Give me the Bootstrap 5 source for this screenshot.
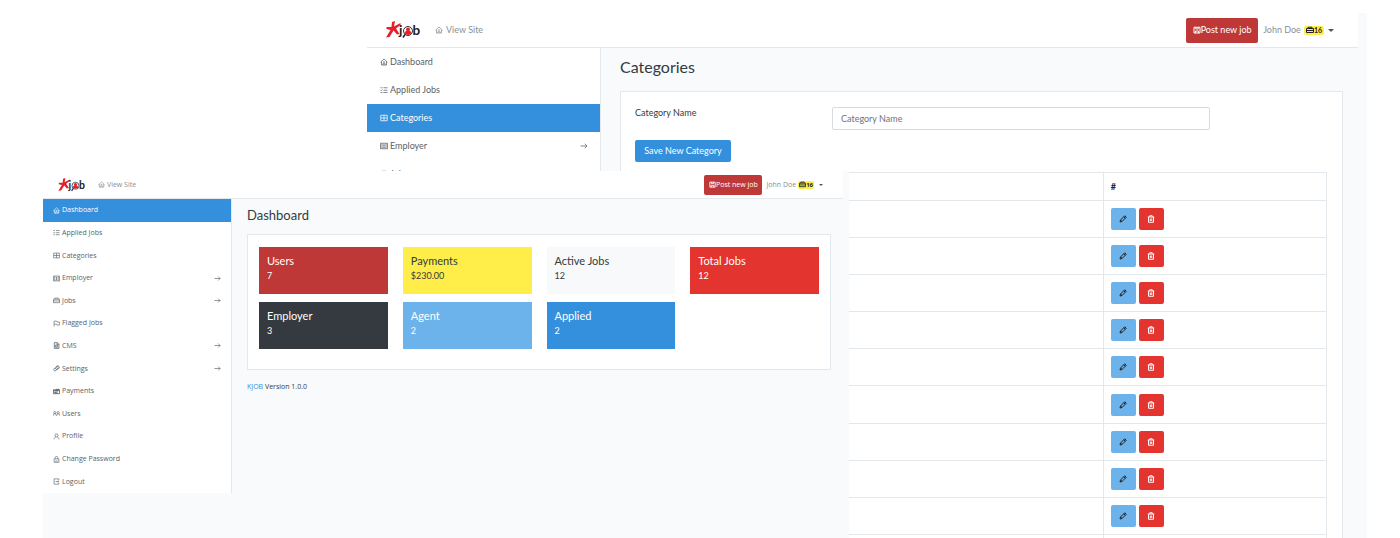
<!DOCTYPE html>
<html lang="en">
<head>
<meta charset="utf-8">
<meta name="viewport" content="width=device-width, initial-scale=1">
<title>KJOB admin</title>
<link href="https://cdn.jsdelivr.net/npm/bootstrap@5.3.0/dist/css/bootstrap.min.css" rel="stylesheet">
<style>
  :root { --line: #e3e8ec; --brand-red: #bf3838; --blue: #3490dc; --sky: #6cb2eb; --red: #e3342f; --yellow: #ffed4a; --ink: #343a40; }
  body { background: #fff; color: var(--ink); font-family: Lato, "Nunito", "Open Sans", sans-serif; }
  a { text-decoration: none; }
  /* Two overlapping windows on one grid */
  .stage { display: grid; height: 100vh; overflow: hidden; grid-template-columns: 43fr 324fr 482fr 518fr 33fr; grid-template-rows: 13px 158px minmax(0, 1fr); }
  .win { background: #f8fafc; min-width: 0; overflow: hidden; }
  .win-back { grid-area: 2 / 3 / 4 / 5; font-size: 9px; line-height: 12px; padding-right: 9px; }
  .win-front { grid-area: 3 / 2 / 4 / 4; z-index: 1; font-family: "Open Sans", Lato, sans-serif; font-size: 7px; line-height: 10px; padding-right: 6px; }
  .ico { width: 8px; height: 8px; fill: none; stroke: currentColor; stroke-width: 1.5; flex: none; }
  .win-front .ico { width: 7px; height: 7px; }
  .topbar { background: #fff; border-bottom: 1px solid var(--line); color: #8b9095; }
  .topbar a { color: inherit; }
  .win-back .topbar { height: 35px; padding: 0 24px 0 19px; }
  .win-front .topbar { height: 28px; padding: 0 20px 0 15px; }
  .win-back .logo { width: 35px; height: 18px; margin-right: 14px; }
  .win-front .logo { width: 28px; height: 14px; margin-right: 12px; }
  .site-link { gap: 3px; }
  .win-front .site-link { gap: 2px; }
  .post-btn { background: var(--brand-red); color: #fff; border: 0; font-size: inherit; line-height: inherit; border-radius: 2px; padding: 0; white-space: nowrap; }
  .post-btn:hover { background: #a93030; color: #fff; }
  .win-back .post-btn { width: 72px; height: 25px; margin-right: 5px; }
  .win-front .post-btn { width: 58px; height: 20px; margin-right: 4px; }
  .user-btn { background: none; border: 0; padding: 0; color: inherit; gap: 3px; }
  .user-btn .ico { stroke-width: 2; }
  .win-front .user-btn { gap: 2px; }
  .count { background: var(--yellow); color: #212529; border-radius: 2px; font-weight: 700; padding: 0 2px; }
  .win-back .count { font-size: 7px; line-height: 9px; }
  .win-front .count { font-size: 6px; line-height: 8px; padding: 0 1px; }
  .caret { border: 3px solid transparent; border-top-color: #555; border-bottom: 0; margin-left: 1px; }
  .win-front .caret { border-width: 2px; border-bottom: 0; margin-left: 3px; }
  .side { background: #fff; border-right: 1px solid var(--line); }
  .win-back .side { flex: 0 0 234px; }
  .win-front .side { flex: 0 0 189px; height: 294px; }
  .side a { color: #5a6168; gap: 2px; }
  .win-back .side a { height: 28px; padding: 0 12px 0 13px; }
  .win-front .side a { padding: 0 10px; flex: 1 1 0; }
  .side a.active { background: var(--blue); color: #fff; }
  .panel { background: #fff; border: 1px solid var(--line); }
  .win-back .content { padding: 0 15px 0 19px; }
  .win-front .content { padding: 0 12px 0 15px; }
  .win-back h1 { font-size: 16px; line-height: 20px; margin: 9px 0 14px; }
  .win-front h1 { font-family: Lato, sans-serif; font-size: 13px; line-height: 16px; margin: 8px 0 11px; }
  .win-back .panel { padding: 15px 15px 0 14px; }
  .form-line { display: grid; grid-template-columns: 197fr 378fr 117fr; margin-bottom: 10px; }
  .form-line input { height: 23px; font-size: inherit; line-height: 12px; padding: 0 8px; border: 1px solid #d5dbe1; border-radius: 2px; }
  .form-line input::placeholder { color: #6c757d; }
  .save-btn { background: var(--blue); color: #fff; border: 0; border-radius: 2px; width: 96px; height: 22px; padding: 0; font-size: inherit; line-height: inherit; }
  .jobs-table { height: 400px; margin: 10px 0 0; border: 1px solid var(--line); table-layout: fixed; }
  .jobs-table th, .jobs-table td { border: 1px solid var(--line); padding: 0 7px; vertical-align: middle; color: #212529; }
  .jobs-table thead th { height: 28px; }
  .act { width: 25px; height: 22px; border: 0; border-radius: 2px; padding: 0; }
  .act .ico { stroke-width: 2; }
  .act-edit { background: var(--sky); color: #212529; }
  .act-del { background: var(--red); color: #fff; }
  .tiles { display: grid; grid-template-columns: repeat(4, 1fr); gap: 8px 15px; padding: 12px 11px 20px; }
  .tile { padding: 7px 8px 8px; height: 47px; color: #fff; font-family: Lato, sans-serif; font-size: 9px; line-height: 12px; }
  .tile h2 { font-size: 11px; line-height: 13px; margin: 0 0 3px; font-weight: 400; }
  .foot { margin-top: 12px; }
  .foot a { color: var(--blue); }
</style>
</head>
<body>
<svg class="d-none" xmlns="http://www.w3.org/2000/svg">
  <symbol id="i-home" viewBox="0 0 16 16"><path d="M1 8.500 8 2l7 6.500M3 7v7h10V7M6 14v-2a2 2 0 0 1 4 0v2M6 8h4"/></symbol>
  <symbol id="i-list" viewBox="0 0 16 16"><path d="M1 3l1.500 1.500L5 2M1 8l1.500 1.500L5 7M1 13h4M7 3.500h8M7 8.500h8M7 13h8"/></symbol>
  <symbol id="i-grid" viewBox="0 0 16 16"><path d="M1.500 2.500h13v11h-13zM8 2.500v11M1.500 8h13"/></symbol>
  <symbol id="i-emp" viewBox="0 0 16 16"><path d="M1 2.500h14v11H1zM4 3v10M12 3v10M8 5v6M6.500 6h3M6.500 11h3"/></symbol>
  <symbol id="i-case" viewBox="0 0 16 16"><path d="M1 5h14v8H1zM4 5V2.500h8V5M1 9h14"/></symbol>
  <symbol id="i-flag" viewBox="0 0 16 16"><path d="M2.500 15V2.500H8l1 2h5.500v7H9l-1-2H3"/></symbol>
  <symbol id="i-file" viewBox="0 0 16 16"><path d="M3 1.500h7l3.500 3.500v9.500H3zM6 7h4v5H6zM9.500 2v4H13" stroke-width="1.800"/></symbol>
  <symbol id="i-link" viewBox="0 0 16 16"><circle cx="4.500" cy="10.500" r="3"/><circle cx="11" cy="5" r="3"/><path d="M7 11l4-1 3-5M5 7l3-4 4-1"/></symbol>
  <symbol id="i-card" viewBox="0 0 16 16"><path d="M1 4h14v9H1zM1 6h14M4 9h3v2H4zM9 4v9M7 3h7" stroke-width="2"/></symbol>
  <symbol id="i-users" viewBox="0 0 16 16"><circle cx="4" cy="6" r="2.500"/><circle cx="12" cy="6" r="2.500"/><path d="M.5 13c0-6 7-6 7 0M8.500 13c0-6 7-6 7 0"/></symbol>
  <symbol id="i-user" viewBox="0 0 16 16"><circle cx="8" cy="5.500" r="3.500"/><path d="M2.500 14.500c0-3 2-5 4-5.500M13.500 14.500c0-3-2-5-4-5.500"/></symbol>
  <symbol id="i-lock" viewBox="0 0 16 16"><path d="M2.500 6.500h11v8h-11zM5 6V4a3 3 0 0 1 6 0v2M5 11.500h6"/></symbol>
  <symbol id="i-out" viewBox="0 0 16 16"><path d="M13.500 5V2h-11v12h11v-3M6 8h7M11 6l2.500 2L11 10"/></symbol>
  <symbol id="i-arrow" viewBox="0 0 16 16"><path d="M1 8h13M9.500 3.500 14 8l-4.500 4.500"/></symbol>
  <symbol id="i-save" viewBox="0 0 16 16"><path d="M2 2.500h12v11.500H2zM5.500 3v3h5V3M5 14v-4h6v4" stroke-width="2"/></symbol>
  <symbol id="i-pen" viewBox="0 0 16 16"><path d="M2 14l1-4 8.500-8.500 3 3L6 13zM9.500 3.500l3 3M3 10l3 3"/></symbol>
  <symbol id="i-trash" viewBox="0 0 16 16"><path d="M1.500 4h13M3 4v10.500h10V4M5.500 4V1.500h5V4M6.500 7v5M9.500 7v5"/></symbol>
  <symbol id="i-logo" viewBox="0 0 70 36">
    <path fill="#e5202a" d="M12 2 18 0 16 11 29 4 29 8 20 15 27 26 22 27 15 19 7 32 0 33 9 18 1 16 1 12 11 12z"/>
    <circle cx="44" cy="20" r="9" fill="#fff" stroke="#333" stroke-width="2"/>
    <circle cx="44" cy="17" r="4" fill="#e5202a"/><path fill="#e5202a" d="M37 24c0-6 14-6 14 0-3 5-11 5-14 0z"/>
    <path d="M38 27l-4 6" stroke="#222" stroke-width="3"/>
    <text x="26" y="28" font-family="Lato, sans-serif" font-weight="700" font-size="27" fill="#222">j</text>
    <text x="53" y="28" font-family="Lato, sans-serif" font-weight="700" font-size="27" fill="#222">b</text>
  </symbol>
</svg>

<main class="stage">
  <section class="win win-back" aria-label="Categories">
    <header class="topbar d-flex align-items-center">
      <a href="#" aria-label="Home" class="d-flex"><svg class="logo"><use href="#i-logo"/></svg></a>
      <a href="#" class="site-link d-flex align-items-center me-auto"><svg class="ico"><use href="#i-home"/></svg>View Site</a>
      <button class="btn post-btn d-flex align-items-center justify-content-center"><svg class="ico"><use href="#i-save"/></svg>Post new job</button>
      <button class="user-btn d-flex align-items-center">John Doe <span class="count d-flex align-items-center"><svg class="ico"><use href="#i-case"/></svg>16</span><span class="caret"></span></button>
    </header>
    <div class="d-flex">
      <nav class="side d-flex flex-column">
        <a href="#" class="d-flex align-items-center"><svg class="ico"><use href="#i-home"/></svg>Dashboard</a>
        <a href="#" class="d-flex align-items-center"><svg class="ico"><use href="#i-list"/></svg>Applied Jobs</a>
        <a href="#" class="d-flex align-items-center active"><svg class="ico"><use href="#i-grid"/></svg>Categories</a>
        <a href="#" class="d-flex align-items-center"><svg class="ico"><use href="#i-emp"/></svg>Employer<svg class="ico ms-auto"><use href="#i-arrow"/></svg></a>
        <a href="#" class="d-flex align-items-center"><svg class="ico"><use href="#i-case"/></svg>Jobs</a>
      </nav>
      <div class="content flex-fill">
        <h1 class="fw-normal">Categories</h1>
        <div class="panel">
          <form>
            <div class="form-line">
              <label for="cat">Category Name</label>
              <input id="cat" class="form-control" type="text" placeholder="Category Name">
            </div>
            <button type="button" class="btn save-btn d-block">Save New Category</button>
          </form>
          <table class="table jobs-table">
            <colgroup><col style="width:67.700%"><col></colgroup>
            <thead><tr><th></th><th>#</th></tr></thead>
            <tbody id="rows"></tbody>
          </table>
        </div>
      </div>
    </div>
  </section>

  <section class="win win-front" aria-label="Dashboard">
    <header class="topbar d-flex align-items-center">
      <a href="#" aria-label="Home" class="d-flex"><svg class="logo"><use href="#i-logo"/></svg></a>
      <a href="#" class="site-link d-flex align-items-center me-auto"><svg class="ico"><use href="#i-home"/></svg>View Site</a>
      <button class="btn post-btn d-flex align-items-center justify-content-center"><svg class="ico"><use href="#i-save"/></svg>Post new job</button>
      <button class="user-btn d-flex align-items-center">John Doe <span class="count d-flex align-items-center"><svg class="ico"><use href="#i-case"/></svg>16</span><span class="caret"></span></button>
    </header>
    <div class="d-flex align-items-start">
      <nav class="side d-flex flex-column">
        <a href="#" class="d-flex align-items-center active"><svg class="ico"><use href="#i-home"/></svg>Dashboard</a>
        <a href="#" class="d-flex align-items-center"><svg class="ico"><use href="#i-list"/></svg>Applied Jobs</a>
        <a href="#" class="d-flex align-items-center"><svg class="ico"><use href="#i-grid"/></svg>Categories</a>
        <a href="#" class="d-flex align-items-center"><svg class="ico"><use href="#i-emp"/></svg>Employer<svg class="ico ms-auto"><use href="#i-arrow"/></svg></a>
        <a href="#" class="d-flex align-items-center"><svg class="ico"><use href="#i-case"/></svg>Jobs<svg class="ico ms-auto"><use href="#i-arrow"/></svg></a>
        <a href="#" class="d-flex align-items-center"><svg class="ico"><use href="#i-flag"/></svg>Flagged Jobs</a>
        <a href="#" class="d-flex align-items-center"><svg class="ico"><use href="#i-file"/></svg>CMS<svg class="ico ms-auto"><use href="#i-arrow"/></svg></a>
        <a href="#" class="d-flex align-items-center"><svg class="ico"><use href="#i-link"/></svg>Settings<svg class="ico ms-auto"><use href="#i-arrow"/></svg></a>
        <a href="#" class="d-flex align-items-center"><svg class="ico"><use href="#i-card"/></svg>Payments</a>
        <a href="#" class="d-flex align-items-center"><svg class="ico"><use href="#i-users"/></svg>Users</a>
        <a href="#" class="d-flex align-items-center"><svg class="ico"><use href="#i-user"/></svg>Profile</a>
        <a href="#" class="d-flex align-items-center"><svg class="ico"><use href="#i-lock"/></svg>Change Password</a>
        <a href="#" class="d-flex align-items-center"><svg class="ico"><use href="#i-out"/></svg>Logout</a>
      </nav>
      <div class="content flex-fill">
        <h1 class="fw-normal">Dashboard</h1>
        <div class="panel tiles">
          <div class="tile" style="background:var(--brand-red)"><h2>Users</h2>7</div>
          <div class="tile" style="background:var(--yellow);color:var(--ink)"><h2>Payments</h2>$230.00</div>
          <div class="tile" style="background:#f8f9fa;color:var(--ink)"><h2>Active Jobs</h2>12</div>
          <div class="tile" style="background:var(--red)"><h2>Total Jobs</h2>12</div>
          <div class="tile" style="background:var(--ink)"><h2>Employer</h2>3</div>
          <div class="tile" style="background:var(--sky)"><h2>Agent</h2>2</div>
          <div class="tile" style="background:var(--blue)"><h2>Applied</h2>2</div>
        </div>
        <div class="foot"><a href="#">KJOB</a> Version 1.0.0</div>
      </div>
    </div>
  </section>
</main>
<script src="https://cdn.jsdelivr.net/npm/bootstrap@5.3.0/dist/js/bootstrap.bundle.min.js"></script>
<script>
  const row = '<tr><td></td><td><div class="d-flex" style="gap:3px">' +
    '<button class="btn act act-edit d-flex align-items-center justify-content-center" aria-label="Edit"><svg class="ico"><use href="#i-pen"/></svg></button>' +
    '<button class="btn act act-del d-flex align-items-center justify-content-center" aria-label="Delete"><svg class="ico"><use href="#i-trash"/></svg></button></div></td></tr>';
  document.getElementById('rows').innerHTML = row.repeat(10);
</script>
</body>
</html>
